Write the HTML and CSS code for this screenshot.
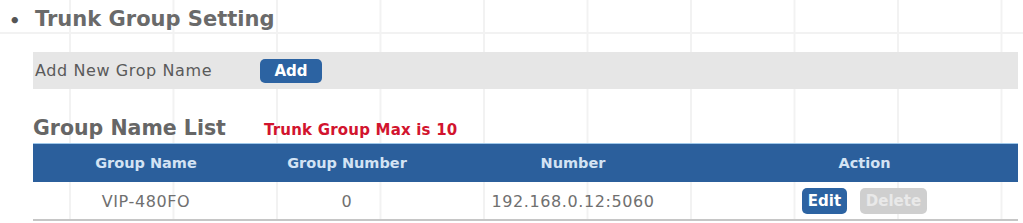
FILE: index.html
```html
<!DOCTYPE html>
<html lang="en">
    <head>
        <meta charset="UTF-8">
        <meta name="viewport" content="width=device-width, initial-scale=1.0">
        <title>Trunk Group Setting</title>
        <link rel="stylesheet" href="styles.css">
    </head>
    <body>
        <div class="page">
            <h2 class="section-title"><span class="bullet">•</span>Trunk Group Setting</h2>

            <div class="add-row">
                <span class="add-label">Add New Grop Name</span>
                <button class="btn btn-blue btn-add">Add</button>
            </div>

            <div class="list-head">
                <h3>Group Name List</h3>
                <span class="max-note">Trunk Group Max is 10</span>
            </div>

            <table>
                <thead>
                    <tr>
                        <th class="col-name">Group Name</th>
                        <th class="col-num">Group Number</th>
                        <th class="col-addr">Number</th>
                        <th>Action</th>
                    </tr>
                </thead>
                <tbody>
                    <tr>
                        <td>VIP-480FO</td>
                        <td>0</td>
                        <td>192.168.0.12:5060</td>
                        <td>
                            <div class="actions">
                                <button class="btn btn-blue btn-edit">Edit</button>
                                <button class="btn btn-off" disabled>Delete</button>
                            </div>
                        </td>
                    </tr>
                </tbody>
            </table>
        </div>
    </body>
</html>
```

FILE: styles.css
```css
* {
    margin: 0;
    padding: 0;
    box-sizing: border-box;
    font-family: "DejaVu Sans", Verdana, sans-serif;
}

body {
    background-color: #fff;
    background-image:
        linear-gradient(to right, #f2f2f2 2px, transparent 2px),
        linear-gradient(to bottom, #f2f2f2 2px, transparent 2px);
    background-size: 103.5px 100%, 100% 2px;
    background-position: 69px 0, 0 32px;
    background-repeat: repeat-x, no-repeat;
    color: #666;
}

.page {
    padding: 7px 5px 0 33px;
}

.section-title {
    display: flex;
    align-items: center;
    height: 24px;
    margin-left: -24px;
    font-size: 21px;
    line-height: 24px;
    font-weight: bold;
    color: #6a6a6a;
}

.bullet {
    width: 26px;
    padding-top: 4px;
    line-height: 20px;
    font-size: 18px;
    color: #555;
}

.add-row {
    display: flex;
    align-items: center;
    height: 37px;
    margin-top: 21px;
    background-color: #e6e6e6;
}

.add-label {
    width: 227px;
    padding-left: 2px;
    font-size: 16px;
    letter-spacing: 0.6px;
    color: #5a5a5a;
}

.btn {
    border: none;
    border-radius: 5px;
    font-weight: bold;
    cursor: pointer;
}

.btn-blue {
    background-color: #2c63a2;
    color: #fff;
}

.btn-add {
    width: 62px;
    height: 24px;
    font-size: 15px;
}

.list-head {
    display: flex;
    align-items: baseline;
    margin-top: 27px;
    height: 27px;
}

.list-head h3 {
    font-size: 20.5px;
    line-height: 24px;
    color: #666;
}

.max-note {
    margin-left: 38px;
    font-size: 15px;
    letter-spacing: 0.2px;
    font-weight: bold;
    color: #d2142e;
}

table {
    width: 985px;
    border-collapse: collapse;
}

thead tr {
    height: 38px;
    background-color: #2b5f9c;
    border-top: 1px solid #9fc8ea;
}

th {
    font-size: 14.5px;
    font-weight: bold;
    color: #d3e3f4;
}

th, td {
    text-align: center;
    padding: 0;
}

.col-name {
    width: 226px;
}

.col-num {
    width: 176px;
}

.col-addr {
    width: 276px;
}

tbody tr {
    height: 38px;
    border-bottom: 2px solid #c6c6c6;
}

td {
    padding-top: 3px;
    font-size: 16px;
    letter-spacing: 0.6px;
    color: #707070;
}

.actions {
    display: flex;
    justify-content: center;
    gap: 13px;
    margin-top: -2px;
}

.btn-edit {
    width: 45px;
    height: 26px;
    font-size: 15px;
    letter-spacing: 0;
}

.btn-off {
    width: 67px;
    height: 26px;
    font-size: 15px;
    background-color: #cfcfcf;
    color: #e9e9e9;
}
```
